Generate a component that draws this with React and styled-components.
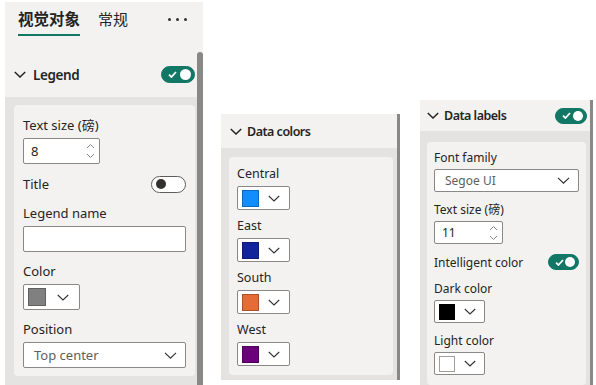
import React from "react";
import styled, { createGlobalStyle } from "styled-components";

const Global = createGlobalStyle`
  html, body { margin: 0; padding: 0; background: #fff; }
  body {
    font-family: "Noto Sans", "Noto Sans CJK SC", sans-serif;
    color: #252423;
  }
`;

const Page = styled.div`
  display: flex;
  align-items: flex-start;
  width: 596px;
  height: 385px;
  overflow: hidden;
  padding-left: 5px;
  box-sizing: border-box;
`;

const Pane = styled.div`
  --ctl: ${(p) => p.$ctl}px;
  --lbl-gap: ${(p) => p.$lblGap}px;
  flex: none;
  width: ${(p) => p.$w}px;
  height: ${(p) => p.$h}px;
  margin-top: ${(p) => p.$top}px;
  margin-right: ${(p) => p.$gap || 0}px;
  font-size: ${(p) => p.$fs}px;
  background: #f3f2f1;
  display: flex;
  flex-direction: column;
  overflow: hidden;
`;

const Tabs = styled.div`
  display: flex;
  align-items: flex-start;
  height: 50px;
  flex: none;
  padding: 0 16px 0 13px;
`;

const Tab = styled.div`
  font-size: ${(p) => (p.$active ? 15.5 : 15)}px;
  font-weight: ${(p) => (p.$active ? 700 : 400)};
  line-height: 20px;
  padding: 7px 0 5px;
  margin-right: 18px;
  border-bottom: 2px solid ${(p) => (p.$active ? "#117865" : "transparent")};
`;

const More = styled.div`
  margin-left: auto;
  display: flex;
  gap: 5px;
  padding-top: 16px;
`;

const Dot = styled.span`
  width: 3px;
  height: 3px;
  border-radius: 50%;
  background: #323130;
`;

const Body = styled.div`
  flex: 1;
  display: flex;
  min-height: 0;
`;

const Content = styled.div`
  flex: 1;
  display: flex;
  flex-direction: column;
  min-width: 0;
`;

const Thumb = styled.div`
  flex: none;
  width: ${(p) => p.$w}px;
  background: #8a8886;
  border-radius: ${(p) => (p.$round ? "3px 3px 0 0" : "0")};
`;

const Header = styled.div`
  flex: none;
  height: ${(p) => p.$h}px;
  display: flex;
  align-items: center;
  padding: 0 ${(p) => p.$pr}px 0 ${(p) => p.$pl}px;
  gap: ${(p) => p.$chevGap}px;
`;

const HeaderTitle = styled.span`
  font-size: ${(p) => p.$fs}px;
  font-weight: 600;
  letter-spacing: ${(p) => p.$ls || 0}px;
  flex: 1;
`;

const Band = styled.div`
  flex: 1;
  background: #e4e3e1;
  padding: ${(p) => p.$pad};
`;

const Card = styled.div`
  background: #f3f2f1;
  border-radius: 4px;
  padding: ${(p) => p.$pad};
  display: flex;
  flex-direction: column;
  gap: ${(p) => p.$gap}px;
`;

const Field = styled.div`
  display: flex;
  flex-direction: column;
  align-items: flex-start;
`;

const Label = styled.div`
  line-height: 18px;
  margin-bottom: var(--lbl-gap);
`;

const Row = styled.div`
  display: flex;
  align-items: center;
  justify-content: space-between;
  height: ${(p) => p.$h}px;
`;

const Box = styled.div`
  box-sizing: border-box;
  height: var(--ctl);
  width: ${(p) => (p.$w ? `${p.$w}px` : "100%")};
  background: #fff;
  border: 1px solid #8a8886;
  border-radius: 2px;
  display: flex;
  align-items: center;
`;

const SpinBox = styled(Box)`
  justify-content: space-between;
  padding: 0 4px 0 7px;
`;

const Select = styled(Box)`
  justify-content: space-between;
  padding: 0 8px 0 10px;
  color: #605e5c;
`;

const ColorBox = styled(Box)`
  padding-left: 4px;
`;

const Swatch = styled.span`
  width: ${(p) => p.$s}px;
  height: ${(p) => p.$s}px;
  box-sizing: border-box;
  background: ${(p) => p.$c};
  border: 1px solid ${(p) => (p.$c === "#ffffff" ? "#a19f9d" : "rgba(0,0,0,0.25)")};
  flex: none;
`;

const ChevSlot = styled.span`
  flex: 1;
  display: flex;
  justify-content: center;
`;

const Switch = styled.span`
  box-sizing: border-box;
  width: ${(p) => p.$w}px;
  height: ${(p) => p.$h}px;
  border-radius: 999px;
  background: ${(p) => (p.$on ? "#117865" : "#fff")};
  border: 1px solid ${(p) => (p.$on ? "#117865" : "#605e5c")};
  display: flex;
  align-items: center;
  justify-content: ${(p) => (p.$on ? "space-between" : "flex-start")};
  padding: 0 3px 0 ${(p) => (p.$on ? 6 : 4)}px;
  flex: none;
`;

const Knob = styled.span`
  width: ${(p) => p.$s}px;
  height: ${(p) => p.$s}px;
  border-radius: 50%;
  background: ${(p) => (p.$on ? "#fff" : "#323130")};
`;

const Chevron = ({ w = 12, color = "#323130", sw = 1.1 }) => (
  <svg width={w} height={Math.round(w * 0.55)} viewBox="0 0 12 6.6">
    <polyline points="0.8,0.8 6,5.8 11.2,0.8" fill="none" stroke={color} strokeWidth={sw} />
  </svg>
);

const SpinArrows = () => (
  <svg width="9" height="18" viewBox="0 0 9 18">
    <polyline points="1,6 4.5,2.5 8,6" fill="none" stroke="#8a8886" strokeWidth="1" />
    <polyline points="1,12 4.5,15.5 8,12" fill="none" stroke="#8a8886" strokeWidth="1" />
  </svg>
);

const Toggle = ({ on, w, h }) => (
  <Switch $on={on} $w={w} $h={h}>
    {on && (
      <svg width="9" height="7" viewBox="0 0 9 7">
        <polyline points="1,3.6 3.4,6 8,1" fill="none" stroke="#fff" strokeWidth="1.8" />
      </svg>
    )}
    <Knob $on={on} $s={on ? h - 6 : h - 7} />
  </Switch>
);

const ColorPick = ({ c, w, s }) => (
  <ColorBox $w={w}>
    <Swatch $c={c} $s={s} />
    <ChevSlot>
      <Chevron w={12} />
    </ChevSlot>
  </ColorBox>
);

const LegendPane = () => (
  <Pane $w={198} $h={383} $top={2} $gap={18} $fs={13} $ctl={26} $lblGap={4}>
    <Tabs>
      <Tab $active>视觉对象</Tab>
      <Tab>常规</Tab>
      <More>
        <Dot />
        <Dot />
        <Dot />
      </More>
    </Tabs>
    <Body>
      <Content>
        <Header $h={45} $pl={9} $pr={2} $chevGap={7}>
          <Chevron w={12} color="#252423" sw={1.5} />
          <HeaderTitle $fs={13.5} $ls={-0.4}>Legend</HeaderTitle>
          <Toggle on w={34} h={17} />
        </Header>
        <Band $pad="8px 2px 0 9px">
          <Card $pad="11px 9px 8px" $gap={10}>
            <Field>
              <Label>Text size (磅)</Label>
              <SpinBox $w={77}>
                <span>8</span>
                <SpinArrows />
              </SpinBox>
            </Field>
            <Row $h={20}>
              <span>Title</span>
              <Toggle w={35} h={17} />
            </Row>
            <Field>
              <Label>Legend name</Label>
              <Box />
            </Field>
            <Field>
              <Label>Color</Label>
              <ColorPick c="#808080" w={57} s={18} />
            </Field>
            <Field>
              <Label>Position</Label>
              <Select>
                <span>Top center</span>
                <Chevron w={13} />
              </Select>
            </Field>
          </Card>
        </Band>
      </Content>
      <Thumb $w={6} $round />
    </Body>
  </Pane>
);

const dataColors = [
  { name: "Central", c: "#118dff" },
  { name: "East", c: "#12239e" },
  { name: "South", c: "#e66c37" },
  { name: "West", c: "#6b007b" },
];

const ColorsPane = () => (
  <Pane $w={179} $h={266} $top={114} $gap={20} $fs={12.5} $ctl={24} $lblGap={3}>
    <Body>
      <Content>
        <Header $h={34} $pl={9} $pr={4} $chevGap={5}>
          <Chevron w={12} color="#252423" sw={1.5} />
          <HeaderTitle $fs={12.5} $ls={-0.5}>Data colors</HeaderTitle>
        </Header>
        <Band $pad="9px 4px 5px 8px">
          <Card $pad="8px 8px 9px" $gap={7}>
            {dataColors.map((d) => (
              <Field key={d.name}>
                <Label>{d.name}</Label>
                <ColorPick c={d.c} w={53} s={17} />
              </Field>
            ))}
          </Card>
        </Band>
      </Content>
      <Thumb $w={3} />
    </Body>
  </Pane>
);

const LabelsPane = () => (
  <Pane $w={173} $h={285} $top={100} $fs={12} $ctl={23} $lblGap={2}>
    <Body>
      <Content>
        <Header $h={31} $pl={7} $pr={3} $chevGap={5}>
          <Chevron w={12} color="#252423" sw={1.5} />
          <HeaderTitle $fs={12.5} $ls={-0.5}>Data labels</HeaderTitle>
          <Toggle on w={32} h={16} />
        </Header>
        <Band $pad="11px 4px 0 7px">
          <Card $pad="7px 7px 10px" $gap={9}>
            <Field>
              <Label>Font family</Label>
              <Select>
                <span>Segoe UI</span>
                <Chevron w={13} />
              </Select>
            </Field>
            <Field>
              <Label>Text size (磅)</Label>
              <SpinBox $w={69}>
                <span>11</span>
                <SpinArrows />
              </SpinBox>
            </Field>
            <Row $h={18}>
              <span>Intelligent color</span>
              <Toggle on w={31} h={16} />
            </Row>
            <Field>
              <Label>Dark color</Label>
              <ColorPick c="#000000" w={51} s={16} />
            </Field>
            <Field>
              <Label>Light color</Label>
              <ColorPick c="#ffffff" w={51} s={16} />
            </Field>
          </Card>
        </Band>
      </Content>
      <Thumb $w={3} />
    </Body>
  </Pane>
);

const App = () => (
  <>
    <Global />
    <Page>
      <LegendPane />
      <ColorsPane />
      <LabelsPane />
    </Page>
  </>
);

export default App;
